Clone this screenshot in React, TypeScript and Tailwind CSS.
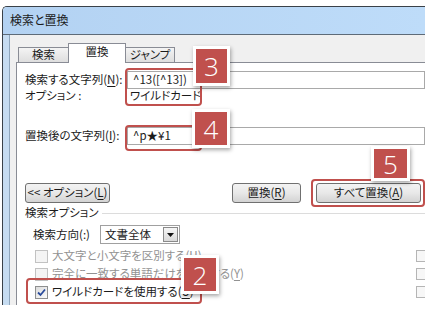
import React from "react";

const JP = "font-['Noto_Sans_CJK_JP','Noto_Sans',sans-serif]";

function Key({ k }: { k: string }) {
  return <span className="underline underline-offset-2">{k}</span>;
}

function Check({ checked = false, disabled = false }: { checked?: boolean; disabled?: boolean }) {
  return (
    <div
      className={`w-[13px] h-[13px] shrink-0 border flex items-center justify-center ${
        disabled ? "border-[#c2c2c2] bg-[#f4f4f4]" : "border-[#8e8f8f] bg-gradient-to-br from-[#dcdcdc] to-[#fbfbfb]"
      }`}
    >
      {checked && (
        <svg width="9" height="9" viewBox="0 0 9 9">
          <path d="M1 4.5 L3.5 7 L8 1.5" fill="none" stroke="#2a4b9b" strokeWidth="1.8" />
        </svg>
      )}
    </div>
  );
}

function WinButton({ children, className }: { children: React.ReactNode; className: string }) {
  return (
    <div
      className={`h-[20px] shrink-0 flex items-center justify-center rounded-[3px] border border-[#707070] bg-gradient-to-b from-[#f3f3f3] via-[#e8e8e8] to-[#d3d3d3] ${className}`}
    >
      {children}
    </div>
  );
}

function Badge({ n, className }: { n: string; className: string }) {
  return (
    <div
      className={`absolute z-20 flex items-center justify-center bg-[#c0504d] border-[3px] border-white box-content -m-[3px] shadow-[1px_2px_4px_rgba(0,0,0,0.35)] text-white text-[26px] font-light leading-none font-['Open_Sans','Liberation_Sans',sans-serif] ${className}`}
    >
      {n}
    </div>
  );
}

export default function App() {
  return (
    <div
      className={`w-[439px] h-[312px] bg-white relative overflow-hidden text-[11.5px] leading-none whitespace-nowrap text-[#1b1b1b] [font-feature-settings:'palt'] ${JP}`}
    >
      {/* dialog window, cut off at right and bottom */}
      <div className="ml-[2px] mt-[6px] w-[423px] h-[299px] flex flex-col overflow-hidden rounded-tl-[5px] border-l border-t border-[#3a4148]">
        <div className="h-[28px] shrink-0 flex items-center pl-[7px] pb-[1px] text-[12px] bg-gradient-to-r from-[#b3d2f2] to-[#bedcf9] border-b border-[#5e6b78]">
          検索と置換
        </div>

        <div className="flex flex-1 min-h-0">
          <div className="w-[7px] shrink-0 bg-[#c6dcf1] border-r border-[#8ea5bb]" />

          <div className="flex-1 bg-[#f0f0f0] pl-[6px] flex flex-col min-w-0">
            {/* tabs */}
            <div className="h-[27px] shrink-0 flex items-end pl-[2px]">
              <div className="w-[50px] h-[15px] flex items-center justify-center border border-b-0 border-r-0 border-[#898c95] bg-gradient-to-b from-[#f4f4f4] to-[#dedede]">
                検索
              </div>
              <div className="relative z-10 w-[58px] h-[20px] -mb-[1px] flex items-center justify-center pb-[3px] border border-b-0 border-[#898c95] bg-white">
                置換
              </div>
              <div className="w-[49px] h-[15px] flex items-center justify-center border border-b-0 border-l-0 border-[#898c95] bg-gradient-to-b from-[#f4f4f4] to-[#dedede]">
                ジャンプ
              </div>
            </div>

            {/* tab panel */}
            <div className="flex-1 bg-white border-l border-t border-[#898c95] pl-[8px] flex flex-col">
              <div className="mt-[8px] h-[18px] flex items-center">
                <div className="w-[102px]">
                  検索する文字列(<Key k="N" />):
                </div>
                <div className="flex-1 h-[18px] border border-[#a9a9a9] flex items-center pl-[5px]">^13([^13])</div>
              </div>
              <div className="h-[14px] flex items-center">
                <div className="w-[105px]">オプション :</div>
                <div>ワイルドカード</div>
              </div>

              <div className="mt-[24px] h-[18px] flex items-center">
                <div className="w-[102px]">
                  置換後の文字列(<Key k="I" />):
                </div>
                <div className="flex-1 h-[18px] border border-[#a9a9a9] flex items-center pl-[5px]">^p★¥1</div>
              </div>

              <div className="mt-[38px] flex items-center">
                <WinButton className="w-[85px]">
                  &lt;&lt; オプション(<Key k="L" />)
                </WinButton>
                <WinButton className="ml-[122px] w-[69px]">
                  置換(<Key k="R" />)
                </WinButton>
                <WinButton className="ml-[15px] w-[105px]">
                  すべて置換(<Key k="A" />)
                </WinButton>
              </div>

              <div className="mt-[3px] h-[14px] flex items-center">
                <span>検索オプション</span>
                <div className="ml-[3px] flex-1 border-t border-[#dcdcdc]" />
              </div>

              <div className="mt-[5px] pl-[8px] h-[19px] flex items-center">
                <div className="w-[67px]">検索方向(:)</div>
                <div className="w-[80px] h-[19px] border border-[#a0a0a0] flex items-center">
                  <span className="flex-1 pl-[4px]">文書全体</span>
                  <div className="w-[15px] h-[15px] mr-[1px] border border-[#8a8a8a] bg-gradient-to-b from-[#f6f6f6] to-[#d9d9d9] flex items-center justify-center">
                    <svg width="7" height="4" viewBox="0 0 7 4">
                      <path d="M0 0 H7 L3.5 4 Z" fill="#111" />
                    </svg>
                  </div>
                </div>
              </div>

              <div className="mt-[3px] w-[403px] h-[18px] pl-[10px] flex items-center gap-[4px] text-[#929292]">
                <Check disabled />
                <span>
                  大文字と小文字を区別する(<Key k="H" />)
                </span>
                <div className="ml-auto w-[12px] h-[12px] border border-[#b5b5b5] bg-[#f7f7f7]" />
              </div>
              <div className="w-[403px] h-[18px] pl-[10px] flex items-center gap-[4px] text-[#929292]">
                <Check disabled />
                <span>
                  完全に一致する単語だけを検索する(<Key k="Y" />)
                </span>
                <div className="ml-auto w-[12px] h-[12px] border border-[#b5b5b5] bg-[#f7f7f7]" />
              </div>
              <div className="w-[403px] h-[18px] pl-[10px] flex items-center gap-[4px]">
                <Check checked />
                <span>
                  ワイルドカードを使用する(<Key k="U" />)
                </span>
                <div className="ml-auto w-[12px] h-[12px] border border-[#b5b5b5] bg-[#f7f7f7]" />
              </div>
            </div>
          </div>
        </div>
      </div>

      {/* callout highlights */}
      <div className="absolute left-[125px] top-[68px] w-[77px] h-[38px] border-2 border-[#c0504d] rounded-[4px]" />
      <div className="absolute left-[125px] top-[125px] w-[77px] h-[26px] border-2 border-[#c0504d] rounded-[4px]" />
      <div className="absolute left-[311px] top-[179px] w-[114px] h-[28px] border-2 border-[#c0504d] rounded-[4px]" />
      <div className="absolute left-[26px] top-[278px] w-[176px] h-[26px] border-2 border-[#c0504d] rounded-[4px]" />

      <Badge n="3" className="left-[196px] top-[49px] w-[31px] h-[34px]" />
      <Badge n="4" className="left-[195px] top-[112px] w-[32px] h-[33px]" />
      <Badge n="5" className="left-[374px] top-[149px] w-[33px] h-[29px]" />
      <Badge n="2" className="left-[184px] top-[258px] w-[32px] h-[33px]" />
    </div>
  );
}
